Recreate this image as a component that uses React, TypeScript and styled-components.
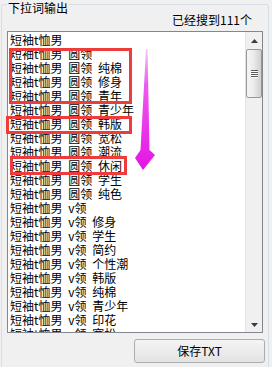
import React from 'react';
import styled, { createGlobalStyle } from 'styled-components';

const GlobalStyle = createGlobalStyle`
  html, body { margin: 0; padding: 0; background: #F0F0F0; width: 272px; height: 367px; overflow: hidden; }
  body { font-family: "Noto Sans CJK SC", "Noto Sans", sans-serif; font-size: 12px; color: #000; }
`;

const Page = styled.div`
  position: relative;
  width: 272px;
  height: 367px;
  padding: 4px 0 0 1px;
  box-sizing: border-box;
  overflow: hidden;
`;

const Group = styled.section`
  width: 268px;
  height: 380px;
  box-sizing: border-box;
  border: 1px solid #D5DFE5;
  border-radius: 3px;
  display: flex;
  flex-direction: column;
`;

const Title = styled.div`
  align-self: flex-start;
  margin: -4px 0 0 5px;
  padding: 0 1px;
  line-height: 14px;
  height: 14px;
  background: #F0F0F0;
`;

const Count = styled.div`
  margin-top: -2px;
  line-height: 14px;
  height: 14px;
  text-align: right;
  padding-right: 16px;
`;

const ListBox = styled.div`
  margin: 4px 0 0 5px;
  width: 256px;
  height: 302px;
  box-sizing: border-box;
  border: 1px solid #828790;
  background: #fff;
  display: flex;
`;

const Rows = styled.div`
  flex: 1;
  padding: 1px 0 0 2px;
  overflow: hidden;
`;

const Row = styled.div`
  height: 14px;
  line-height: 14px;
  white-space: nowrap;
  word-spacing: 3px;
`;

const ScrollBar = styled.div`
  width: 17px;
  box-sizing: border-box;
  border-left: 1px solid #E3E3E3;
  background: #F0F0F0;
  display: flex;
  flex-direction: column;
`;

const ArrowBtn = styled.div<{ $down?: boolean }>`
  height: 17px;
  display: flex;
  align-items: center;
  justify-content: center;
  padding-top: ${p => (p.$down ? '2px' : '0')};
  box-sizing: border-box;
`;

const Thumb = styled.div`
  height: 49px;
  box-sizing: border-box;
  border: 1px solid #979797;
  border-radius: 2px;
  background: linear-gradient(to right, #F6F6F6 0%, #ECECEC 45%, #DCDCDC 75%, #D0D0D0 100%);
  display: flex;
  align-items: center;
  justify-content: center;
`;

const Grip = styled.div`
  width: 7px;
  height: 8px;
  background: repeating-linear-gradient(to bottom, #5A5A5A 0px, #5A5A5A 1px, #FFFFFF 1px, #FFFFFF 2px);
`;

const Spacer = styled.div`
  flex: 1;
`;

const Footer = styled.div`
  display: flex;
  justify-content: flex-end;
  padding: 6px 3px 0 0;
`;

const Button = styled.button`
  width: 131px;
  height: 24px;
  box-sizing: border-box;
  border: 1px solid #ADADAD;
  border-radius: 3px;
  background: linear-gradient(to bottom, #F4F4F4 0%, #ECECEC 50%, #E3E3E3 100%);
  font-family: "Noto Sans CJK SC", "Noto Sans", sans-serif;
  font-size: 12px;
  line-height: 14px;
  color: #000;
  padding: 0;
`;

const Overlay = styled.svg`
  position: absolute;
  left: 0;
  top: 0;
  pointer-events: none;
`;

const tshirt = '短袖t恤男';
const rows = [
  tshirt,
  `${tshirt} 圆领`,
  `${tshirt} 圆领 纯棉`,
  `${tshirt} 圆领 修身`,
  `${tshirt} 圆领 青年`,
  `${tshirt} 圆领 青少年`,
  `${tshirt} 圆领 韩版`,
  `${tshirt} 圆领 宽松`,
  `${tshirt} 圆领 潮流`,
  `${tshirt} 圆领 休闲`,
  `${tshirt} 圆领 学生`,
  `${tshirt} 圆领 纯色`,
  `${tshirt} v领`,
  `${tshirt} v领 修身`,
  `${tshirt} v领 学生`,
  `${tshirt} v领 简约`,
  `${tshirt} v领 个性潮`,
  `${tshirt} v领 韩版`,
  `${tshirt} v领 纯棉`,
  `${tshirt} v领 青少年`,
  `${tshirt} v领 印花`,
  `${tshirt} v领 宽松`,
];

const Tri = ({ down }: { down?: boolean }) => (
  <svg width="7" height="4" viewBox="0 0 7 4">
    <polygon points={down ? '0,0 7,0 3.5,4' : '0,4 7,4 3.5,0'} fill="#3C3C3C" />
  </svg>
);

export default function App() {
  return (
    <>
      <GlobalStyle />
      <Page>
        <Group>
          <Title>下拉词输出</Title>
          <Count>已经搜到111个</Count>
          <ListBox>
            <Rows>
              {rows.map((r, i) => (
                <Row key={i}>{r}</Row>
              ))}
            </Rows>
            <ScrollBar>
              <ArrowBtn>
                <Tri />
              </ArrowBtn>
              <Thumb>
                <Grip />
              </Thumb>
              <Spacer />
              <ArrowBtn $down>
                <Tri down />
              </ArrowBtn>
            </ScrollBar>
          </ListBox>
          <Footer>
            <Button>保存TXT</Button>
          </Footer>
        </Group>
        <Overlay width="272" height="367" viewBox="0 0 272 367">
          <defs>
            <linearGradient id="arrowGrad" x1="0" y1="0" x2="0" y2="1">
              <stop offset="0" stopColor="#F4C4F4" />
              <stop offset="0.3" stopColor="#EE5AEE" />
              <stop offset="1" stopColor="#E414E4" />
            </linearGradient>
          </defs>
          <g fill="none" stroke="#EE3B3B" strokeWidth="3">
            <rect x="10.5" y="49.5" width="120" height="53" />
            <rect x="7.5" y="117.5" width="123" height="15" />
            <rect x="11.5" y="157.5" width="114" height="16" />
          </g>
          <polygon
            points="146,49 147.5,49 149.5,150 155,155 143,170 135,158 140.5,150"
            fill="url(#arrowGrad)"
          />
        </Overlay>
      </Page>
    </>
  );
}
